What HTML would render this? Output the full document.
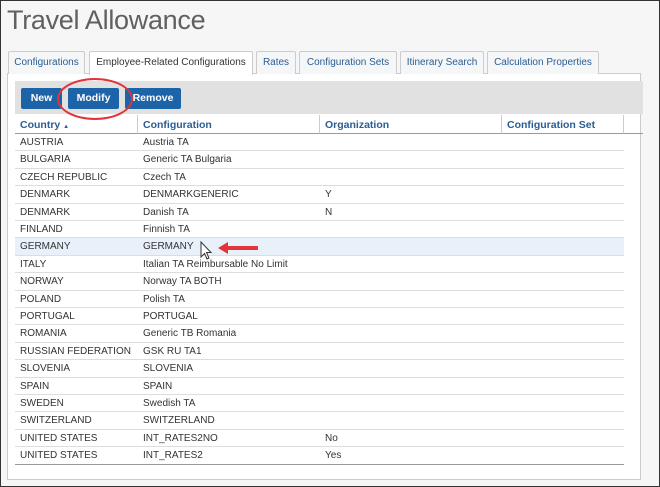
<!DOCTYPE html>
<html><head><style>
*{margin:0;padding:0;box-sizing:border-box}
body{width:660px;height:487px;background:#f6f6f6;font-family:"Liberation Sans",Arial,sans-serif;position:relative;overflow:hidden;border:1px solid #333}
h1{position:absolute;left:6px;top:4px;font-weight:normal;font-size:27px;color:#606060;letter-spacing:-0.3px}
.tab{position:absolute;top:50px;height:23px;border:1px solid #ccc;border-bottom:none;background:#f4f6f8;font-size:10px;color:#2a5d93;padding-top:5px;text-align:center;border-radius:2px 2px 0 0}
.tab.act{background:#fff;color:#333;height:24px}
.panel{position:absolute;left:6px;top:72px;width:634px;height:407px;background:#fff;border:1px solid #ccc}
.bar{position:absolute;left:14px;top:80px;width:628px;height:33px;background:#e1e1e1}
.btn{position:absolute;top:87px;height:21px;background:#1d63a8;color:#fff;font-size:10.5px;font-weight:bold;text-align:center;padding-top:4px;border-radius:2px}
.hdr{position:absolute;top:114px;height:19px;font-size:10.5px;font-weight:bold;color:#2a5d93;padding:4px 0 0 5px;border-right:1px solid #ccc;border-bottom:1px solid #999}
.row{position:absolute;left:14px;width:609px;height:17.4px;border-bottom:1px solid #ddd;font-size:10px;color:#333}
.row span{position:absolute;top:3px}
</style></head><body>
<h1>Travel Allowance</h1>
<div class="panel"></div>
<div class="tab" style="left:7px;width:77px">Configurations</div>
<div class="tab act" style="left:88px;width:164px">Employee-Related Configurations</div>
<div class="tab" style="left:255px;width:40px">Rates</div>
<div class="tab" style="left:298px;width:98px">Configuration Sets</div>
<div class="tab" style="left:399px;width:84px">Itinerary Search</div>
<div class="tab" style="left:486px;width:112px">Calculation Properties</div>
<div class="bar"></div>
<div class="btn" style="left:20px;width:41px">New</div>
<div class="btn" style="left:67px;width:51px">Modify</div>
<div class="btn" style="left:124px;width:56px">Remove</div>
<div style="position:absolute;left:56px;top:77px;width:76px;height:42px;border:2.5px solid #e0343c;border-radius:50%"></div>
<div class="hdr" style="left:14px;width:123px">Country <span style="font-size:6px">▲</span></div>
<div class="hdr" style="left:137px;width:182px">Configuration</div>
<div class="hdr" style="left:319px;width:182px">Organization</div>
<div class="hdr" style="left:501px;width:122px">Configuration Set</div>
<div class="hdr" style="left:623px;width:19px;border-right:none"></div>
<div id="rows"></div>
<script>
var d=[["AUSTRIA","Austria TA",""],["BULGARIA","Generic TA Bulgaria",""],["CZECH REPUBLIC","Czech TA",""],["DENMARK","DENMARKGENERIC","Y"],["DENMARK","Danish TA","N"],["FINLAND","Finnish TA",""],["GERMANY","GERMANY",""],["ITALY","Italian TA Reimbursable No Limit",""],["NORWAY","Norway TA BOTH",""],["POLAND","Polish TA",""],["PORTUGAL","PORTUGAL",""],["ROMANIA","Generic TB Romania",""],["RUSSIAN FEDERATION","GSK RU TA1",""],["SLOVENIA","SLOVENIA",""],["SPAIN","SPAIN",""],["SWEDEN","Swedish TA",""],["SWITZERLAND","SWITZERLAND",""],["UNITED STATES","INT_RATES2NO","No"],["UNITED STATES","INT_RATES2","Yes"]];
var h="";d.forEach(function(r,i){h+='<div class="row" style="top:'+(133+i*17.4)+'px;'+(i==6?'background:#e8f1fa;':'')+(i==18?'border-bottom-color:#999;':'')+'"><span style="left:5px">'+r[0]+'</span><span style="left:128px">'+r[1]+'</span><span style="left:310px">'+r[2]+'</span></div>'});
document.getElementById('rows').innerHTML=h;
</script>
<svg style="position:absolute;left:199px;top:240px" width="62" height="22">
<path d="M1 1 L1 16 L4.5 12.5 L7 18 L9 17 L6.5 11.5 L11 11.5 Z" fill="#fff" stroke="#333" stroke-width="1"/>
<path d="M18 7 L28 1 L28 5 L58 5 L58 9 L28 9 L28 13 Z" fill="#e3343c"/>
</svg>
</body></html>
